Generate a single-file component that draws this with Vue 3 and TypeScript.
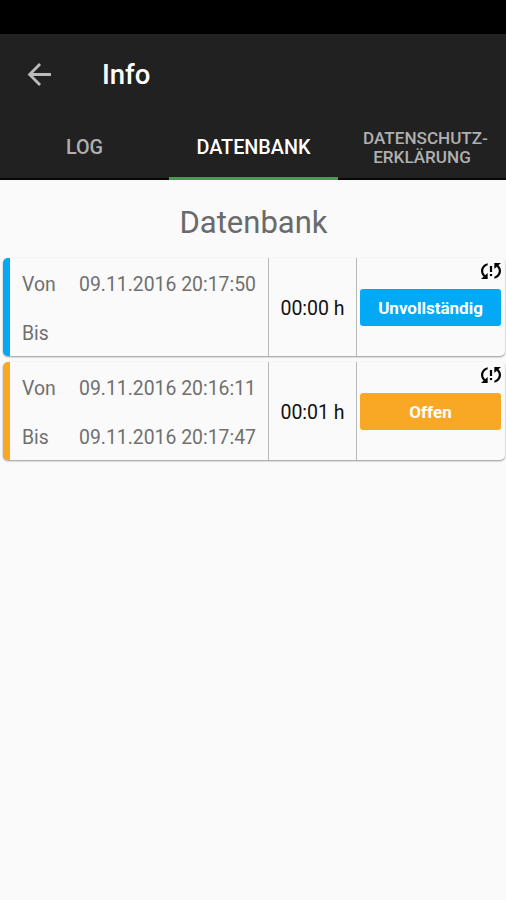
<script setup lang="ts">
interface Entry {
  id: number
  from: string
  to: string
  duration: string
  status: string
  kind: 'incomplete' | 'open'
}

const tabs = [
  { label: ['LOG'], active: false },
  { label: ['DATENBANK'], active: true },
  { label: ['DATENSCHUTZ-', 'ERKLÄRUNG'], active: false },
]

const entries: Entry[] = [
  { id: 1, from: '09.11.2016 20:17:50', to: '', duration: '00:00 h', status: 'Unvollständig', kind: 'incomplete' },
  { id: 2, from: '09.11.2016 20:16:11', to: '09.11.2016 20:17:47', duration: '00:01 h', status: 'Offen', kind: 'open' },
]
</script>

<template>
  <div class="screen">
    <div class="statusbar"></div>
    <header class="appbar">
      <svg class="back" viewBox="0 0 24 24"><path d="M23 12H3M12.500 2L2.500 12l10 10" /></svg>
      <h1 class="title">Info</h1>
    </header>
    <nav class="tabs">
      <div v-for="tab in tabs" :key="tab.label[0]" class="tab" :class="{ active: tab.active, multi: tab.label.length > 1 }">
        <span v-for="line in tab.label" :key="line">{{ line }}</span>
      </div>
    </nav>
    <main class="content">
      <h2 class="heading">Datenbank</h2>
      <article v-for="entry in entries" :key="entry.id" class="card" :class="entry.kind">
        <div class="times">
          <span>Von</span><span>{{ entry.from }}</span>
          <span>Bis</span><span>{{ entry.to }}</span>
        </div>
        <div class="duration">{{ entry.duration }}</div>
        <div class="state">
          <svg class="sync" viewBox="3 4 18 16" preserveAspectRatio="none">
            <path d="M3 12c0 2.21.91 4.2 2.36 5.64L3 20h6v-6l-2.24 2.24C5.68 15.15 5 13.66 5 12c0-2.61 1.67-4.83 4-5.65V4.26C5.55 5.15 3 8.27 3 12zm8 5h2v-2h-2v2zM21 4h-6v6l2.24-2.24C18.32 8.85 19 10.34 19 12c0 2.61-1.67 4.83-4 5.65v2.09c3.45-.89 6-4.01 6-7.74 0-2.21-.91-4.2-2.36-5.64L21 4zm-10 9h2V7h-2v6z" />
          </svg>
          <div class="badge">{{ entry.status }}</div>
        </div>
      </article>
    </main>
  </div>
</template>

<style>
body {
  margin: 0;
  background: #fafafa;
}
</style>

<style scoped>
.screen {
  height: 900px;
  overflow: hidden;
  background: #fafafa;
  font-family: Roboto, "Liberation Sans", sans-serif;
}
.statusbar {
  height: 34px;
  background: #000;
}
.appbar {
  display: flex;
  align-items: center;
  height: 80px;
  padding-left: 27px;
  background: #212121;
}
.back {
  width: 25px;
  height: 25px;
  fill: none;
  stroke: #bcbcbc;
  stroke-width: 2.7;
}
.title {
  margin: 0 0 0 50px;
  font-size: 27.5px;
  font-weight: 500;
  color: #fff;
}
.tabs {
  display: grid;
  grid-template-columns: 169px 169px 168px;
  height: 66px;
  background: #212121;
  box-shadow: inset 0 -2px #080808;
}
.tab {
  display: flex;
  flex-direction: column;
  align-items: center;
  justify-content: center;
  box-sizing: border-box;
  padding-top: 5px;
  border-bottom: 3px solid transparent;
  font-size: 19.8px;
  font-weight: 500;
  line-height: 20px;
  color: #b0b0b0;
}
.tab.active {
  color: #fff;
  border-bottom-color: #43a047;
}
.tab.multi {
  padding-top: 4px;
  font-size: 17.1px;
  line-height: 19px;
}
.tab.multi span:first-child {
  padding-left: 7px;
}
.content {
  padding: 20px 1px 0 3px;
}
.heading {
  margin: 0 1px 16px 0;
  height: 42px;
  font-size: 31px;
  font-weight: 400;
  line-height: 45px;
  text-align: center;
  color: #6a6a6a;
}
.card {
  display: grid;
  grid-template-columns: 258px 89px 1fr;
  box-sizing: border-box;
  height: 98px;
  margin-bottom: 6px;
  border-left: 7px solid;
  border-radius: 5px;
  background: #fafafa;
  box-shadow: 0 1px 2px rgba(0, 0, 0, 0.4);
}
.incomplete {
  border-left-color: #03a9f4;
}
.open {
  border-left-color: #f9a825;
}
.times {
  display: grid;
  grid-template-columns: 57px 1fr;
  grid-template-rows: 49px 49px;
  align-items: center;
  padding-left: 12px;
  padding-top: 2px;
  height: 96px;
  font-size: 19.4px;
  white-space: nowrap;
  color: #707070;
}
.duration {
  display: flex;
  align-items: center;
  justify-content: center;
  padding-top: 3px;
  border: solid #b8b8b8;
  border-width: 0 1px;
  font-size: 19.5px;
  color: #111;
}
.state {
  display: flex;
  flex-direction: column;
  align-items: flex-end;
  padding: 5px 4px 0 3px;
}
.sync {
  width: 20px;
  height: 16px;
}
.badge {
  width: 100%;
  height: 37px;
  margin-top: 10px;
  border-radius: 3px;
  font-size: 17px;
  font-weight: 700;
  line-height: 38px;
  text-align: center;
  color: #fff;
}
.incomplete .badge {
  background: #03a9f4;
}
.open .badge {
  background: #f9a825;
}
</style>
